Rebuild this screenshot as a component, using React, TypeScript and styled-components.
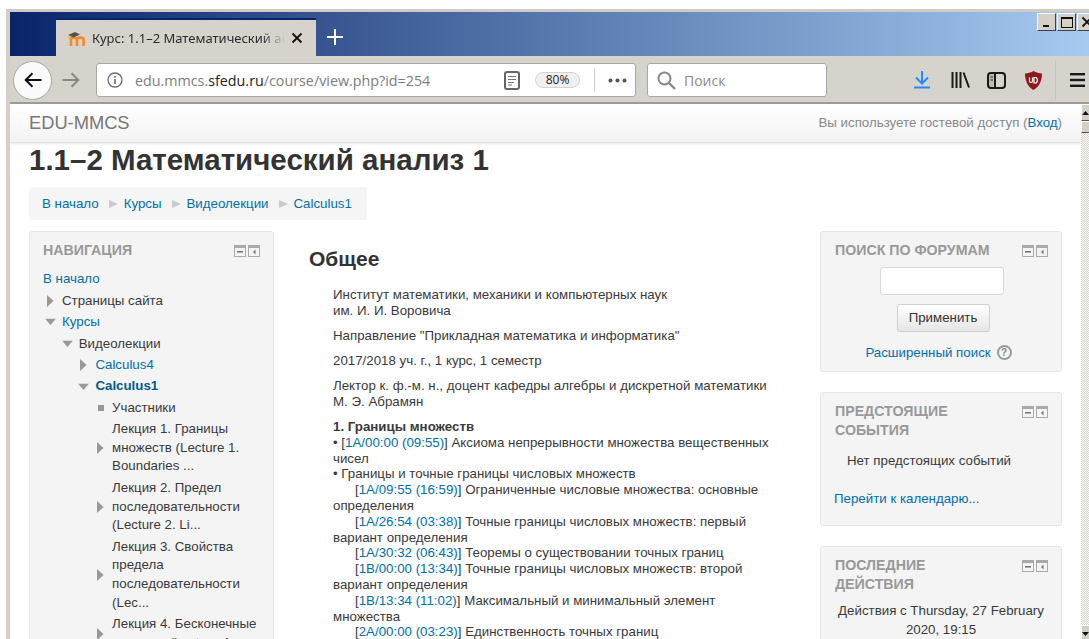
import React from "react";
import styled, { createGlobalStyle } from "styled-components";

const Global = createGlobalStyle`
  html, body { margin: 0; padding: 0; background: #fff; overflow: hidden; }
  #root { height: 639px; overflow: hidden; }
  a { text-decoration: none; color: #0070a8; }
`;

const Screen = styled.div`
  height: 630px;
  margin: 9px 0 0 6px;
  border-top: 3px solid #cfccc5;
  border-left: 4px solid #d4d0c8;
  display: flex;
  flex-direction: column;
  overflow: hidden;
`;

const TitleBar = styled.div`
  flex: 0 0 44px;
  display: flex;
  align-items: flex-end;
  padding-left: 46px;
  background: linear-gradient(to right, #0a246a, #a6caf0);
`;

const Tab = styled.div`
  width: 260px;
  height: 38px;
  box-sizing: border-box;
  border-top: 2px solid #0a246a;
  padding: 0 13px 0 11px;
  background: #d6d3cc;
  display: flex;
  align-items: center;
  gap: 6px;
`;

const TabTitle = styled.span`
  flex: 1;
  font: 13px "Noto Sans", sans-serif;
  color: #2b2b2b;
  white-space: nowrap;
  overflow: hidden;
  -webkit-mask-image: linear-gradient(to right, #000 88%, transparent);
  mask-image: linear-gradient(to right, #000 88%, transparent);
`;

const NewTab = styled.div`
  width: 38px;
  height: 38px;
  display: flex;
  align-items: center;
  justify-content: center;
`;

const WindowControls = styled.div`
  margin: 0 -8px auto auto;
  padding-top: 1px;
  display: flex;
`;

const WinButton = styled.div<{ $w: number }>`
  width: ${(p) => p.$w}px;
  height: 18px;
  box-sizing: border-box;
  margin-right: 1px;
  background: #d4d0c8;
  border: 1px solid;
  border-color: #fff #404040 #404040 #fff;
  display: flex;
  align-items: center;
  justify-content: center;
`;

const Toolbar = styled.div`
  flex: 0 0 48px;
  box-sizing: border-box;
  display: flex;
  align-items: center;
  background: #d6d3cc;
  border-bottom: 2px solid #9d9b96;
  padding: 2px 0 0 3px;
`;

const BackButton = styled.div`
  width: 39px;
  height: 39px;
  box-sizing: border-box;
  border-radius: 50%;
  background: #fbfbfb;
  border: 1px solid #a8a6a1;
  display: flex;
  align-items: center;
  justify-content: center;
  flex: none;
`;

const ForwardSlot = styled.div`
  width: 44px;
  box-sizing: border-box;
  padding-left: 10px;
  display: flex;
  flex: none;
`;

const UrlBar = styled.div`
  width: 540px;
  height: 34px;
  box-sizing: border-box;
  flex: none;
  background: #fff;
  border: 1px solid #a9a7a2;
  border-radius: 3px;
  display: flex;
  align-items: center;
  padding-left: 10px;
  font: 14.3px "Open Sans", sans-serif;
  color: #7d7d7d;
`;

const Url = styled.span`
  margin-left: 12px;
  width: 369px;
  white-space: nowrap;
  b { font-weight: 400; color: #1d1d1d; }
`;

const ZoomPill = styled.span`
  margin-left: 15px;
  width: 45px;
  height: 16px;
  box-sizing: border-box;
  border: 1px solid #d3d3d3;
  border-radius: 8px;
  background: #f0f0f0;
  font: 12px/14px "Open Sans", sans-serif;
  color: #222;
  text-align: center;
`;

const BarDivider = styled.i`
  display: block;
  width: 1px;
  height: 24px;
  background: #cfcdc8;
  margin: 0 13px 0 14px;
`;

const SearchBar = styled.div`
  width: 180px;
  height: 34px;
  box-sizing: border-box;
  flex: none;
  margin-left: 11px;
  background: #fff;
  border: 1px solid #a9a7a2;
  border-radius: 3px;
  display: flex;
  align-items: center;
  gap: 8px;
  padding-left: 9px;
  font: 14px "Open Sans", sans-serif;
  color: #8b8b8b;
`;

const ToolIcons = styled.div`
  flex: 1;
  display: flex;
  align-items: center;
  padding-left: 85px;
`;

const ToolIcon = styled.span<{ $gap: number }>`
  display: flex;
  margin-left: ${(p) => p.$gap}px;
`;

const ToolDivider = styled.i`
  display: block;
  width: 1px;
  height: 40px;
  margin-left: 13px;
  background: #c6c4be;
`;

const Viewport = styled.div`
  flex: 1;
  min-height: 0;
  display: flex;
  overflow: hidden;
  font: 13.3px/15.8px "Liberation Sans", Arial, sans-serif;
  color: #3a3a3a;
`;

const Page = styled.div`
  width: 1071px;
  flex: none;
  overflow: hidden;
`;

const Scrollbar = styled.div`
  flex: 1;
  display: flex;
  flex-direction: column;
  justify-content: space-between;
  background-color: #f2f0ec;
  background-image: repeating-conic-gradient(#d4d0c8 0 25%, #fff 0 50%);
  background-size: 2px 2px;
`;

const ScrollTop = styled.div`
  display: flex;
  flex-direction: column;
`;

const ScrollButton = styled.div<{ $h: number }>`
  height: ${(p) => p.$h}px;
  box-sizing: border-box;
  background: #d4d0c8;
  border: 1px solid;
  border-color: #fff #555 #555 #fff;
  display: flex;
  align-items: center;
  justify-content: center;
`;

const SiteHeader = styled.header`
  height: 38px;
  box-sizing: border-box;
  padding: 0 19px;
  display: flex;
  align-items: center;
  justify-content: space-between;
  background: linear-gradient(#fff, #f3f3f3);
  box-shadow: 0 1px 3px rgba(0, 0, 0, 0.18);
`;

const Brand = styled.span`
  font-size: 18.3px;
  color: #777;
`;

const Guest = styled.span`
  color: #888;
`;

const Content = styled.div`
  padding: 0 19px;
`;

const PageTitle = styled.h1`
  margin: 0;
  padding-top: 2px;
  font: bold 29.5px/32px "Liberation Sans", Arial, sans-serif;
  color: #333;
`;

const Crumbs = styled.nav`
  width: fit-content;
  min-width: 311px;
  height: 33px;
  margin-top: 11px;
  padding: 0 15px 0 13px;
  box-sizing: border-box;
  border-radius: 3px;
  background: #f5f5f5;
  display: flex;
  align-items: center;
`;

const CrumbArrow = styled.span`
  width: 0;
  height: 0;
  margin: 0 6px 0 10px;
  border-style: solid;
  border-width: 4.5px 0 4.5px 9px;
  border-color: transparent transparent transparent #cbcbcb;
`;

const Columns = styled.div`
  display: grid;
  grid-template-columns: 245px 546px 242px;
  margin-top: 11px;
  align-items: start;
`;

const Block = styled.section`
  box-sizing: border-box;
  background: #f4f4f4;
  border: 1px solid #e6e6e6;
  border-radius: 3px;
  padding: 9px 13px 0;
  & + & { margin-top: 20px; }
`;

const BlockHead = styled.div`
  display: flex;
  justify-content: space-between;
  align-items: flex-start;
`;

const BlockTitle = styled.h2<{ $inset?: boolean }>`
  margin: 0 0 0 ${(p) => (p.$inset ? 1 : 0)}px;
  width: 170px;
  font: bold 14.2px/19px "Liberation Sans", Arial, sans-serif;
  color: #999;
  text-transform: uppercase;
`;

const BlockIcons = styled.div`
  display: flex;
  gap: 2px;
  margin-top: 4px;
`;

const IconBox = styled.span`
  display: flex;
  width: 12px;
  height: 12px;
`;

const Tree = styled.ul`
  list-style: none;
  margin: 9px 0 0;
  padding: 0 0 30px;
  line-height: 18.7px;
`;

const TreeRow = styled.li<{ $depth: number; $plain?: boolean }>`
  position: relative;
  padding-block: 1.35px;
  padding-left: ${(p) => (p.$plain ? 0 : 19 + p.$depth * 16.7)}px;
`;

const TreeMark = styled.span<{ $depth: number }>`
  position: absolute;
  left: ${(p) => p.$depth * 16.7}px;
  width: 15px;
  top: 50%;
  transform: translateY(-50%);
  display: flex;
  justify-content: center;
`;

const Strong = styled.a`
  font-weight: bold;
  color: #005c8a;
`;

const Main = styled.main`
  padding: 0 35px;
`;

const SectionTitle = styled.h3`
  margin: 15px 0 0;
  font: bold 21px/26px "Liberation Sans", Arial, sans-serif;
  color: #333;
`;

const Summary = styled.div`
  margin-top: 15px;
  padding-left: 24px;
`;

const Para = styled.p`
  margin: 0 0 9.3px;
`;

const Entry = styled.div<{ $indent?: boolean }>`
  text-indent: ${(p) => (p.$indent ? 22 : 0)}px;
`;

const SearchForm = styled.div`
  display: flex;
  flex-direction: column;
  align-items: center;
  padding: 0 0 10px;
`;

const ForumInput = styled.div`
  width: 124px;
  height: 28px;
  box-sizing: border-box;
  background: #fff;
  border: 1px solid #d8d8d8;
  border-radius: 3px;
  margin: 7px 0 0 1px;
`;

const ApplyButton = styled.div`
  width: 93px;
  height: 28px;
  box-sizing: border-box;
  margin: 9px 0 0 4px;
  border: 1px solid #cfcfcf;
  border-radius: 3px;
  background: linear-gradient(#fff, #e6e6e6);
  line-height: 26px;
  text-align: center;
  color: #333;
`;

const AdvancedLine = styled.div`
  margin: 13px 5px 0 0;
  display: flex;
  align-items: center;
  gap: 6px;
`;

const Help = styled.span`
  width: 15px;
  height: 15px;
  box-sizing: border-box;
  border: 2px solid #999;
  border-radius: 50%;
  font: bold 10px/11px "Liberation Sans", Arial, sans-serif;
  color: #888;
  text-align: center;
`;

const EventsBody = styled.div`
  padding-bottom: 19px;
`;

const NoEvents = styled.div`
  margin: 13px 0 0 13px;
`;

const CalendarLink = styled.a`
  display: block;
  margin-top: 22px;
`;

const Activity = styled.div`
  margin-top: 8px;
  line-height: 18.7px;
  text-align: center;
  padding-bottom: 30px;
`;

const ArrowRight = () => (
  <svg width="7" height="12" viewBox="0 0 7 12">
    <path d="M0 0l6.500 6L0 12z" fill="#999" />
  </svg>
);

const ArrowDown = () => (
  <svg width="11" height="7" viewBox="0 0 11 7">
    <path d="M0 0h11L5.500 6.500z" fill="#999" />
  </svg>
);

const Square = () => (
  <svg width="6" height="6" viewBox="0 0 6 6">
    <rect width="6" height="6" fill="#999" />
  </svg>
);

const BlockControls = () => (
  <BlockIcons>
    <IconBox>
      <svg width="12" height="12" viewBox="0 0 12 12">
        <rect x=".5" y=".5" width="11" height="11" fill="#f4f4f4" stroke="#aaa" />
        <rect x="1" y="1" width="10" height="2" fill="#aaa" />
        <rect x="3" y="6" width="6" height="1.600" fill="#777" />
      </svg>
    </IconBox>
    <IconBox>
      <svg width="12" height="12" viewBox="0 0 12 12">
        <rect x=".5" y=".5" width="11" height="11" fill="#f4f4f4" stroke="#aaa" />
        <rect x="1" y="1" width="10" height="2" fill="#aaa" />
        <path d="M7.500 4.500L5 7l2.500 2.500z" fill="#777" />
      </svg>
    </IconBox>
  </BlockIcons>
);

// Moodle's orange "m" with its graduation cap
const MoodleIcon = () => (
  <svg width="19" height="15" viewBox="0 0 19 15" fill="none">
    <path d="M4 15V8.500C4 6 10 6 10 8.500V15M10 8.500C10 6 16.500 6 16.500 8.500V15" stroke="#f28a26" strokeWidth="2.600" />
    <path d="M1 4L8 1l5 2.500-6.500 3z" fill="#5a5047" />
    <path d="M2 4.500v4" stroke="#f6b06a" strokeWidth="1.400" />
  </svg>
);

const CloseGlyph = () => (
  <svg width="12" height="12" viewBox="0 0 12 12">
    <path d="M1.500 1.500l9 9M10.500 1.500l-9 9" stroke="#111" strokeWidth="1.800" />
  </svg>
);

const PlusGlyph = () => (
  <svg width="16" height="16" viewBox="0 0 16 16">
    <path d="M8 0v16M0 8h16" stroke="#fff" strokeWidth="2" />
  </svg>
);

const MinimizeGlyph = () => (
  <svg width="10" height="10" viewBox="0 0 10 10">
    <rect x="1" y="8" width="6" height="2" fill="#111" />
  </svg>
);

const MaximizeGlyph = () => (
  <svg width="12" height="11" viewBox="0 0 12 11" fill="none">
    <rect x=".5" y="1" width="11" height="9.500" stroke="#111" />
    <rect x="0" y="0" width="12" height="2" fill="#111" />
  </svg>
);

const ArrowGlyph = ({ color, flip }: { color: string; flip?: boolean }) => (
  <svg width="18" height="16" viewBox="0 0 18 16" fill="none" style={flip ? { transform: "scaleX(-1)" } : undefined}>
    <path d="M17.500 8H2M8.500 1.200L1.700 8l6.800 6.800" stroke={color} strokeWidth="2" />
  </svg>
);

const InfoGlyph = () => (
  <svg width="16" height="16" viewBox="0 0 16 16" fill="none">
    <circle cx="8" cy="8" r="7" stroke="#6b6b6b" strokeWidth="1.300" />
    <rect x="7.200" y="7" width="1.600" height="5" fill="#6b6b6b" />
    <rect x="7.200" y="4" width="1.600" height="1.700" fill="#6b6b6b" />
  </svg>
);

const ReaderGlyph = () => (
  <svg width="16" height="19" viewBox="0 0 16 19" fill="none">
    <rect x="1" y="1" width="14" height="17" rx="2" fill="#fff" stroke="#666" strokeWidth="2" />
    <path d="M4 5.500h8M4 8.500h8M4 11.500h6M4 14h4" stroke="#777" strokeWidth="1.200" />
  </svg>
);

const DotsGlyph = () => (
  <svg width="19" height="5" viewBox="0 0 19 5">
    <circle cx="2.500" cy="2.500" r="2" fill="#555" />
    <circle cx="9.500" cy="2.500" r="2" fill="#555" />
    <circle cx="16.500" cy="2.500" r="2" fill="#555" />
  </svg>
);

const SearchGlyph = () => (
  <svg width="19" height="19" viewBox="0 0 19 19" fill="none">
    <circle cx="7.500" cy="7.500" r="6" stroke="#888" strokeWidth="2" />
    <path d="M12 12l6 6" stroke="#888" strokeWidth="2.400" />
  </svg>
);

const DownloadGlyph = () => (
  <svg width="16" height="18" viewBox="0 0 16 18" fill="none">
    <path d="M8 0v12M2 6.500L8 12.500l6-6" stroke="#1f8fff" strokeWidth="2" />
    <rect x="0" y="15.500" width="16" height="2" fill="#1f8fff" />
  </svg>
);

const LibraryGlyph = () => (
  <svg width="19" height="16" viewBox="0 0 19 16" fill="none" stroke="#1a1a1a" strokeWidth="2">
    <path d="M1.500 0v16M5.500 0v16M9.500 0v16M12.500 0.500L18 15.500" />
  </svg>
);

const SidebarGlyph = () => (
  <svg width="19" height="17" viewBox="0 0 19 17" fill="none">
    <rect x="1" y="1" width="17" height="15" rx="3" stroke="#1a1a1a" strokeWidth="2" />
    <rect x="1" y="1" width="7" height="15" rx="2" fill="#1a1a1a" fillOpacity=".12" />
    <path d="M8 1v15" stroke="#1a1a1a" strokeWidth="2" />
    <path d="M3.500 5h2.500M3.500 8h2.500" stroke="#1a1a1a" strokeWidth="1.200" />
  </svg>
);

const ShieldGlyph = () => (
  <svg width="17" height="19" viewBox="0 0 17 19">
    <path d="M8.500 0C11 1.500 14 2.500 17 2.500 17 10 14 16 8.500 19 3 16 0 10 0 2.500 3 2.500 6 1.500 8.500 0z" fill="#8f1a1e" />
    <path d="M4.500 6.500v3.500c0 2 3 2 3 0V6.500M9 6.500h1.500c2.400 0 2.400 5.500 0 5.500H9z" fill="none" stroke="#fff" strokeWidth="1.200" />
  </svg>
);

const MenuGlyph = () => (
  <svg width="15" height="14" viewBox="0 0 15 14">
    <rect y="0" width="15" height="2.400" fill="#1a1a1a" />
    <rect y="5.800" width="15" height="2.400" fill="#1a1a1a" />
    <rect y="11.600" width="15" height="2.400" fill="#1a1a1a" />
  </svg>
);

const ScrollCaret = ({ up }: { up?: boolean }) => (
  <svg width="7" height="4" viewBox="0 0 7 4">
    <path d={up ? "M0 4h7L3.500 0z" : "M0 0h7L3.500 4z"} fill="#111" />
  </svg>
);

type Node = {
  depth: number;
  mark?: "right" | "down" | "square";
  text: React.ReactNode;
  plain?: boolean;
};

const navNodes: Node[] = [
  { depth: 0, plain: true, text: <a href="#">В начало</a> },
  { depth: 0, mark: "right", text: "Страницы сайта" },
  { depth: 0, mark: "down", text: <a href="#">Курсы</a> },
  { depth: 1, mark: "down", text: "Видеолекции" },
  { depth: 2, mark: "right", text: <a href="#">Calculus4</a> },
  { depth: 2, mark: "down", text: <Strong href="#">Calculus1</Strong> },
  { depth: 3, mark: "square", text: "Участники" },
  { depth: 3, mark: "right", text: <>Лекция 1. Границы<br />множеств (Lecture 1.<br />Boundaries ...</> },
  { depth: 3, mark: "right", text: <>Лекция 2. Предел<br />последовательности<br />(Lecture 2. Li...</> },
  { depth: 3, mark: "right", text: <>Лекция 3. Свойства<br />предела<br />последовательности<br />(Lec...</> },
  { depth: 3, mark: "right", text: <>Лекция 4. Бесконечные<br />пределы (Lecture 4.</> },
];

const Marks = { right: <ArrowRight />, down: <ArrowDown />, square: <Square /> };

const crumbs = ["В начало", "Курсы", "Видеолекции", "Calculus1"];

// Timed links of the first lecture; "tail" is what runs on to the next line
const lectureEntries = [
  { code: "1A/09:55 (16:59)", text: "Ограниченные числовые множества: основные", tail: "определения" },
  { code: "1A/26:54 (03:38)", text: "Точные границы числовых множеств: первый", tail: "вариант определения" },
  { code: "1A/30:32 (06:43)", text: "Теоремы о существовании точных границ" },
  { code: "1B/00:00 (13:34)", text: "Точные границы числовых множеств: второй", tail: "вариант определения" },
  { code: "1B/13:34 (11:02)", text: "Максимальный и минимальный элемент", tail: "множества" },
  { code: "2A/00:00 (03:23)", text: "Единственность точных границ" },
];

export default function App() {
  return (
    <>
      <Global />
      <Screen>
        <TitleBar>
          <Tab>
            <MoodleIcon />
            <TabTitle>Курс: 1.1–2 Математический анализ 1</TabTitle>
            <CloseGlyph />
          </Tab>
          <NewTab><PlusGlyph /></NewTab>
          <WindowControls>
            <WinButton $w={19}><MinimizeGlyph /></WinButton>
            <WinButton $w={19}><MaximizeGlyph /></WinButton>
            <WinButton $w={19}><CloseGlyph /></WinButton>
          </WindowControls>
        </TitleBar>
        <Toolbar>
          <BackButton><ArrowGlyph color="#111" /></BackButton>
          <ForwardSlot><ArrowGlyph color="#888" flip /></ForwardSlot>
          <UrlBar>
            <InfoGlyph />
            <Url>edu.mmcs.<b>sfedu.ru</b>/course/view.php?id=254</Url>
            <ReaderGlyph />
            <ZoomPill>80%</ZoomPill>
            <BarDivider />
            <DotsGlyph />
          </UrlBar>
          <SearchBar><SearchGlyph />Поиск</SearchBar>
          <ToolIcons>
            <ToolIcon $gap={2}><DownloadGlyph /></ToolIcon>
            <ToolIcon $gap={21}><LibraryGlyph /></ToolIcon>
            <ToolIcon $gap={17}><SidebarGlyph /></ToolIcon>
            <ToolIcon $gap={19}><ShieldGlyph /></ToolIcon>
            <ToolDivider />
            <ToolIcon $gap={14}><MenuGlyph /></ToolIcon>
          </ToolIcons>
        </Toolbar>
        <Viewport>
          <Page>
            <SiteHeader>
              <Brand>EDU-MMCS</Brand>
              <Guest>Вы используете гостевой доступ (<a href="#">Вход</a>)</Guest>
            </SiteHeader>
            <Content>
              <PageTitle>1.1–2 Математический анализ 1</PageTitle>
              <Crumbs>
                {crumbs.map((c, i) => (
                  <React.Fragment key={c}>
                    {i > 0 && <CrumbArrow />}
                    <a href="#">{c}</a>
                  </React.Fragment>
                ))}
              </Crumbs>
              <Columns>
                <aside>
                  <Block>
                    <BlockHead>
                      <BlockTitle>Навигация</BlockTitle>
                      <BlockControls />
                    </BlockHead>
                    <Tree>
                      {navNodes.map((n, i) => (
                        <TreeRow key={i} $depth={n.depth} $plain={n.plain}>
                          {n.mark && <TreeMark $depth={n.depth}>{Marks[n.mark]}</TreeMark>}
                          {n.text}
                        </TreeRow>
                      ))}
                    </Tree>
                  </Block>
                </aside>
                <Main>
                  <SectionTitle>Общее</SectionTitle>
                  <Summary>
                    <Para>Институт математики, механики и компьютерных наук<br />им. И. И. Воровича</Para>
                    <Para>Направление "Прикладная математика и информатика"</Para>
                    <Para>2017/2018 уч. г., 1 курс, 1 семестр</Para>
                    <Para>Лектор к. ф.-м. н., доцент кафедры алгебры и дискретной математики<br />М. Э. Абрамян</Para>
                    <Entry><b>1. Границы множеств</b></Entry>
                    <Entry>• [<a href="#">1A/00:00 (09:55)</a>] Аксиома непрерывности множества вещественных<br />чисел</Entry>
                    <Entry>• Границы и точные границы числовых множеств</Entry>
                    {lectureEntries.map((e) => (
                      <Entry $indent key={e.code}>
                        [<a href="#">{e.code}</a>] {e.text}
                        {e.tail && <><br />{e.tail}</>}
                      </Entry>
                    ))}
                  </Summary>
                </Main>
                <aside>
                  <Block>
                    <BlockHead>
                      <BlockTitle $inset>Поиск по форумам</BlockTitle>
                      <BlockControls />
                    </BlockHead>
                    <SearchForm>
                      <ForumInput />
                      <ApplyButton>Применить</ApplyButton>
                      <AdvancedLine><a href="#">Расширенный поиск</a><Help>?</Help></AdvancedLine>
                    </SearchForm>
                  </Block>
                  <Block>
                    <BlockHead>
                      <BlockTitle $inset>Предстоящие события</BlockTitle>
                      <BlockControls />
                    </BlockHead>
                    <EventsBody>
                      <NoEvents>Нет предстоящих событий</NoEvents>
                      <CalendarLink href="#">Перейти к календарю...</CalendarLink>
                    </EventsBody>
                  </Block>
                  <Block>
                    <BlockHead>
                      <BlockTitle $inset>Последние действия</BlockTitle>
                      <BlockControls />
                    </BlockHead>
                    <Activity>Действия с Thursday, 27 February 2020, 19:15</Activity>
                  </Block>
                </aside>
              </Columns>
            </Content>
          </Page>
          <Scrollbar>
            <ScrollTop>
              <ScrollButton $h={17}><ScrollCaret up /></ScrollButton>
              <ScrollButton $h={12} />
            </ScrollTop>
            <ScrollButton $h={17}><ScrollCaret /></ScrollButton>
          </Scrollbar>
        </Viewport>
      </Screen>
    </>
  );
}
